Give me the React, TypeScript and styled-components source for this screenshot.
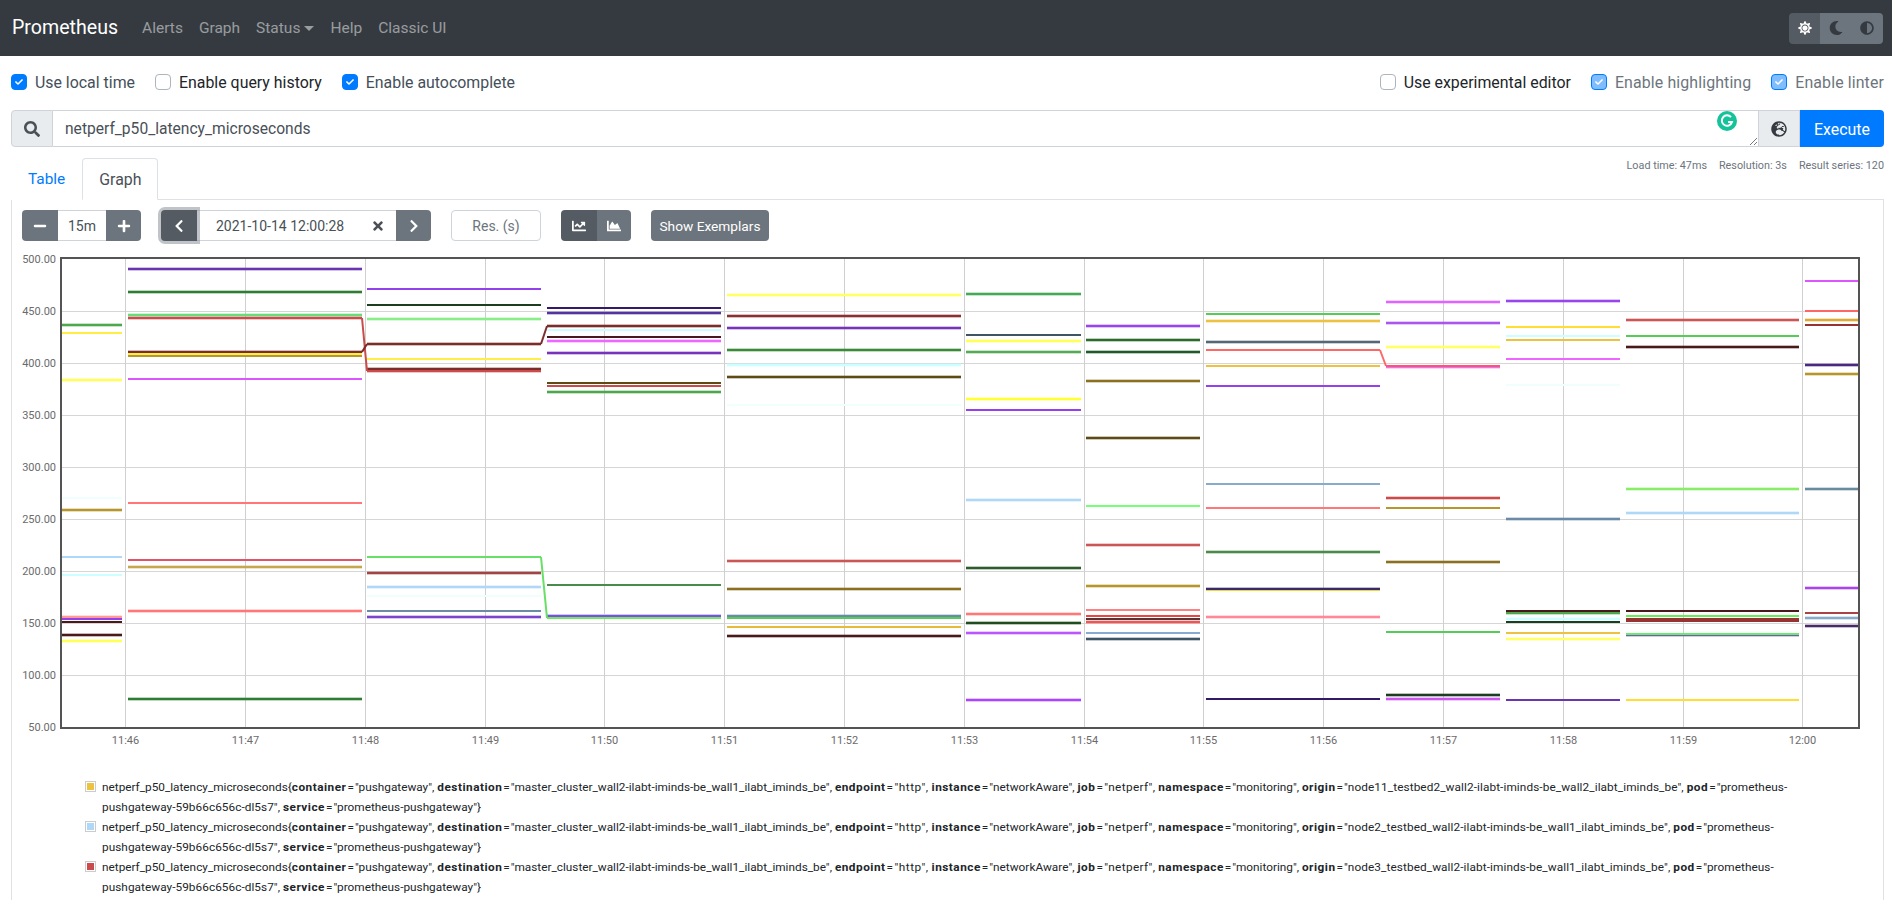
import React from "react";
import styled, { createGlobalStyle } from "styled-components";
import { FaSearch, FaGlobeEurope, FaSun, FaMoon, FaAdjust, FaMinus, FaPlus, FaChevronLeft, FaChevronRight, FaTimes, FaChartLine, FaChartArea, FaCheck } from "react-icons/fa";

const FONT = `Roboto, "Liberation Sans", sans-serif`;

const Global = createGlobalStyle`
  html, body { margin: 0; padding: 0; height: 100%; overflow: hidden; background: #fff; }
  body { font-family: ${FONT}; font-size: 15.9px; color: #212529; }
  * { box-sizing: border-box; }
`;

const Page = styled.div`display: flex; flex-direction: column; height: 100vh;`;
const Navbar = styled.nav`display: flex; align-items: center; height: 56px; padding: 0 9px 0 12px; background: #343a40; flex: none;`;
const Brand = styled.span`font-size: 19.6px; color: #fff; margin-right: 16px; margin-top: -2px;`;
const NavLink = styled.span`color: rgba(255,255,255,.5); font-size: 15.5px; padding: 0 8px; display: inline-flex; align-items: center;`;
const Caret = styled.i`margin-left: 4px; border-top: 5px solid; border-left: 5px solid transparent; border-right: 5px solid transparent;`;
const ThemeGroup = styled.div`margin-left: auto; display: flex; border-radius: 4px; overflow: hidden; height: 31px;`;
const ThemeBtn = styled.span<{ $on?: boolean }>`width: 31.3px; display: flex; align-items: center; justify-content: center; font-size: 14px; background: ${p => p.$on ? "#545b62" : "#6c757d"}; color: ${p => p.$on ? "#fff" : "#343a40"};`;

const Main = styled.main`flex: 1; display: flex; flex-direction: column; padding: 0 8px 0 11px; min-height: 0;`;
const OptionsRow = styled.div`display: flex; justify-content: space-between; margin-top: 14px; height: 24px;`;
const OptionGroup = styled.div`display: flex;`;
const Option = styled.label<{ $disabled?: boolean; $checked?: boolean }>`display: flex; align-items: center; gap: 8px; margin-right: 20px; letter-spacing: ${p => p.$disabled ? ".12px" : "0"}; color: ${p => p.$disabled ? "#6c757d" : p.$checked ? "#444f5a" : "#212529"}; &:last-child { margin-right: 0; }`;
const Box = styled.span<{ $checked?: boolean; $disabled?: boolean }>`
  width: 16px; height: 16px; border-radius: 4px; display: flex; align-items: center; justify-content: center; color: #fff; font-size: 8px;
  background: ${p => !p.$checked ? "#fff" : p.$disabled ? "#80bdff" : "#007bff"};
  border: 1px solid ${p => p.$checked ? "#007bff" : "#adb5bd"};
`;

const QueryRow = styled.div`display: flex; height: 37px; margin-top: 16px; position: relative;`;
const Prepend = styled.div`width: 42px; display: flex; align-items: center; justify-content: center; background: #e9ecef; border: 1px solid #ced4da; border-radius: 4px 0 0 4px; color: #495057; font-size: 16px;`;
const QueryInput = styled.div`flex: 1; display: flex; align-items: center; padding: 1px 0 0 12px; border: 1px solid #ced4da; border-left: none; color: #495057; font-size: 15.6px; position: relative;`;
const Resize = styled.svg`position: absolute; right: 0; bottom: 0;`;
const Grammarly = styled.svg`position: absolute; right: 21px; top: 0;`;
const GlobeBtn = styled.div`width: 41px; display: flex; align-items: center; justify-content: center; background: #e9ecef; border: 1px solid #ced4da; border-left: none; color: #343a40; font-size: 16px;`;
const Execute = styled.div`width: 84px; padding-top: 1px; display: flex; align-items: center; justify-content: center; background: #007bff; color: #fff; border-radius: 0 4px 4px 0;`;

const TabsRow = styled.div`display: flex; justify-content: space-between; align-items: flex-start; margin-top: 9px; flex: none;`;
const Tabs = styled.div`display: flex; margin-top: 2px;`;
const Tab = styled.div<{ $active?: boolean }>`height: 42px; padding: 0 16px; font-size: ${p => p.$active ? 15.9 : 15.4}px; display: flex; align-items: center; border: 1px solid ${p => p.$active ? "#dee2e6" : "transparent"}; border-bottom-color: ${p => p.$active ? "#fff" : "transparent"}; border-radius: 4px 4px 0 0; background: #fff; color: ${p => p.$active ? "#495057" : "#007bff"}; position: relative; z-index: 1;`;
const Stats = styled.div`display: flex; gap: 12px; font-size: 10.8px; line-height: 20px; color: #6c757d;`;
const Pane = styled.section`flex: 1; margin-top: -1px; border: 1px solid #dee2e6; border-bottom: none; padding: 10px 0 0 10px; min-height: 0;`;

const Controls = styled.div`display: flex; height: 31px; font-size: 14px;`;
const Group = styled.div`display: flex; margin-right: 20px;`;
const Btn = styled.span<{ $w: number; $dark?: boolean; $l?: boolean; $r?: boolean; $focus?: boolean }>`
  width: ${p => p.$w}px; display: flex; align-items: center; justify-content: center; color: #fff;
  background: ${p => p.$dark ? "#545b62" : "#6c757d"};
  border-radius: ${p => p.$l ? 4 : 0}px ${p => p.$r ? 4 : 0}px ${p => p.$r ? 4 : 0}px ${p => p.$l ? 4 : 0}px;
  ${p => p.$focus ? "box-shadow: 0 0 0 3px rgba(130,138,145,.5); position: relative; z-index: 1;" : ""}
`;
const Field = styled.span<{ $w: number; $muted?: boolean; $round?: boolean }>`
  width: ${p => p.$w}px; display: flex; align-items: center; justify-content: center; position: relative;
  border: 1px solid #ced4da; ${p => p.$round ? "border-radius: 4px;" : "border-left: none; border-right: none;"}
  color: ${p => p.$muted ? "#6c757d" : "#495057"}; background: #fff;
`;
const DateField = styled(Field)`justify-content: flex-start; padding-left: 19px;`;
const Clear = styled.span`position: absolute; right: 11px; top: 8px; color: #495057; font-size: 14px; display: flex;`;
const TextBtn = styled.span`width: 118px; border-radius: 4px; background: #6c757d; color: #fff; font-size: 13.7px; display: flex; align-items: center; justify-content: center;`;

const ChartSvg = styled.svg`display: block; margin-top: 9px; flex: none;`;
const AxisText = styled.text`font-family: ${FONT}; font-size: 11px; fill: #6b6b6b;`;

const Legend = styled.div`margin: 22px 0 0 63px; width: 1716px; font-size: 11.8px; line-height: 20px;`;
const LegendRow = styled.div`display: flex;`;
const Swatch = styled.span<{ $c: string }>`flex: none; width: 11px; height: 11px; margin: 4px 6px 0 0; border: 1px solid #ccc; padding: 1px; &::before { content: ""; display: block; width: 100%; height: 100%; background: ${p => p.$c}; }`;
const Key = styled.b`letter-spacing: .5px;`;
const Eq = styled.span`margin: 0 1px;`;
const PairWrap = styled.span<{ $ls: number }>`letter-spacing: ${p => p.$ls}px;`;

const C = {
  gold: "#edc240", blue: "#afd8f8", red: "#cb4b4b", green: "#4da74d", purple: "#9440ed",
  yellow: "#ffee44", lemon: "#ffff55", cyan: "#ccffff", pale: "#f0fffd", dgreen: "#2e7d32", dkgreen: "#1c3d20",
  lgreen: "#77ee77", mgreen: "#55cc55", pink: "#ff7777", magenta: "#e866ff", maroon: "#7d2c2c", dark: "#4a1a1a",
  vio: "#6a35b0", ind: "#331a66", olive: "#b8962e", brown: "#5e4a14", khaki: "#8c7022", steel: "#6a8aa8",
  slate: "#3f5566", sky: "#88aacc", orchid: "#bb55ff",
};

type L = [number, string, 1?];
type Seg = { x: [number, number]; lines: L[] };
const segs: Seg[] = [
  { x: [62, 122], lines: [[325, C.green, 1], [333, C.yellow], [380, C.lemon, 1], [498, C.pale], [510, C.olive, 1], [557, C.blue], [575, C.cyan], [617, "#ff9999", 1], [619, C.purple], [622, C.dark], [635, C.dark, 1], [641, C.lemon, 1]] },
  { x: [128, 362], lines: [[269, C.vio, 1], [292, C.dgreen, 1], [315, "#66dd77", 1], [318, C.red, 1], [352, C.maroon, 1], [354, C.yellow], [356, C.olive], [379, "#dd55ff"], [503, C.pink], [560, "#dd5566"], [567, "#c4a850", 1], [611, C.pink, 1], [699, C.dgreen, 1]] },
  { x: [367, 541], lines: [[289, C.purple], [305, C.dkgreen], [319, "#88ee88", 1], [344, C.maroon, 1], [359, C.yellow], [369, C.maroon, 1], [371, C.red, 1], [557, "#66e066"], [573, "#a04444", 1], [587, C.blue, 1], [596, C.pale], [611, C.steel], [617, "#7a44cc", 1]] },
  { x: [547, 721], lines: [[308, C.ind], [313, "#5533a0", 1], [326, C.maroon, 1], [330, C.cyan], [337, C.dark], [341, "#ee66ff", 1], [353, "#7733bb", 1], [383, C.brown], [386, C.red], [392, C.green, 1], [585, "#4a8a4a"], [615, C.blue], [616, C.purple], [618, "#66ee55"]] },
  { x: [727, 961], lines: [[295, "#ffff66", 1], [316, "#8a3030", 1], [328, "#7733bb", 1], [350, "#3a8a3a", 1], [365, C.cyan, 1], [377, C.brown, 1], [405, C.pale], [561, "#cc5555", 1], [589, C.khaki, 1], [616, C.steel, 1], [618, C.mgreen], [627, "#e8b93a"], [636, C.dark, 1]] },
  { x: [966, 1081], lines: [[294, "#44aa55", 1], [335, C.slate], [341, "#ffff55", 1], [352, "#55aa55", 1], [399, "#ffff33", 1], [410, C.purple], [500, C.blue, 1], [568, "#2d5d2d", 1], [614, C.pink, 1], [623, "#1f4d1f", 1], [633, C.orchid, 1], [700, "#aa44ff", 1]] },
  { x: [1086, 1200], lines: [[326, "#9944ee", 1], [340, "#2d6b2d", 1], [352, "#1f5a2a", 1], [381, C.khaki, 1], [438, C.brown, 1], [506, "#77ff77"], [545, "#cc5555", 1], [586, C.olive, 1], [610, "#ff8080"], [616, "#ee4444"], [622, "#ee5555", 1], [619, "#553333"], [633, C.sky], [639, C.slate, 1]] },
  { x: [1206, 1380], lines: [[314, C.mgreen], [321, C.gold, 1], [342, "#556677", 1], [350, "#ff6666"], [366, C.gold], [386, C.purple], [484, C.sky], [508, C.pink], [552, "#4a8a4a", 1], [590, "#e8d840"], [589, "#3a2a66", 1], [617, "#ff8899", 1], [699, C.ind]] },
  { x: [1386, 1500], lines: [[302, "#dd66ff", 1], [323, "#aa55ee", 1], [347, "#ffff66", 1], [367, "#dd77ff", 1], [366, "#ff5566"], [498, C.red, 1], [508, C.olive], [562, C.khaki, 1], [632, C.mgreen], [695, C.dkgreen, 1], [699, "#cc55ee", 1]] },
  { x: [1506, 1620], lines: [[301, "#9944ee", 1], [327, "#ffdd33"], [336, C.cyan], [340, C.gold], [359, "#ee66ff"], [385, C.pale], [519, C.steel, 1], [611, C.dark], [613, C.green, 1], [619, C.cyan, 1], [622, C.dkgreen], [633, C.gold], [639, "#ffff66", 1], [700, C.vio]] },
  { x: [1626, 1799], lines: [[320, "#cc5555", 1], [336, C.mgreen], [347, C.dark, 1], [489, "#88ee66", 1], [513, C.blue, 1], [611, C.dark], [619, "#993333"], [621, "#993333"], [616, "#66ee55"], [635, "#7a55bb", 1], [634, "#66ee66"], [700, "#ffdd33"]] },
  { x: [1805, 1859], lines: [[281, "#dd55ff"], [311, "#ff6666"], [320, "#ddaa33", 1], [325, "#993333"], [365, "#4a2a80", 1], [374, C.olive, 1], [489, "#6a8aa0", 1], [588, "#aa44ee", 1], [613, "#aa4444"], [618, C.sky, 1], [626, "#4a2a66", 1]] },
];
const connectors: { pts: string; c: string }[] = [
  { pts: "362,318 367,371", c: C.red },
  { pts: "362,352 367,344", c: C.maroon },
  { pts: "541,344 547,326", c: C.maroon },
  { pts: "541,557 547,618", c: "#66e066" },
  { pts: "1380,350 1386,366", c: "#ff6666" },
];

const yTicks = [500, 450, 400, 350, 300, 250, 200, 150, 100, 50];
const xTicks = ["11:46", "11:47", "11:48", "11:49", "11:50", "11:51", "11:52", "11:53", "11:54", "11:55", "11:56", "11:57", "11:58", "11:59", "12:00"];
const xPos = [125.5, 245.5, 365.5, 485.5, 604.5, 724.5, 844.5, 964.5, 1084.5, 1203.5, 1323.5, 1443.5, 1563.5, 1683.5, 1802.5];
const yPos = (v: number) => (v === 50 ? 727.5 : 363.5 + (400 - v) * 1.04);

function Chart() {
  return (
    <ChartSvg width={1841} height={505} viewBox="22 250 1841 505">
      {yTicks.slice(1, -1).map(v => <line key={v} x1={61} x2={1860} y1={yPos(v)} y2={yPos(v)} stroke="#d6d6d6" />)}
      {xPos.map(x => <line key={x} x1={x} x2={x} y1={259} y2={728} stroke="#cfcfcf" />)}
      {segs.map((s, i) => (
        <g key={i}>
          {s.lines.filter(l => l[2]).map((l, j) => <line key={j} x1={s.x[0]} x2={s.x[1]} y1={l[0]} y2={l[0]} stroke={l[1]} strokeWidth={4} opacity={0.3} />)}
          {s.lines.map((l, j) => <line key={j} x1={s.x[0]} x2={s.x[1]} y1={l[0]} y2={l[0]} stroke={l[1]} strokeWidth={2} />)}
        </g>
      ))}
      {connectors.map((c, i) => <polyline key={i} points={c.pts} fill="none" stroke={c.c} strokeWidth={2} />)}
      <rect x={61} y={258} width={1798} height={470} fill="none" stroke="#545454" strokeWidth={2} />
      {yTicks.map(v => <AxisText key={v} x={56} y={(v === 50 ? 728 : yPos(v)) + 3} textAnchor="end">{v.toFixed(2)}</AxisText>)}
      {xTicks.map((t, i) => <AxisText key={t} x={xPos[i]} y={744} textAnchor="middle">{t}</AxisText>)}
    </ChartSvg>
  );
}

const series = [
  { c: "#edc240", o: "node11_testbed2_wall2-ilabt-iminds-be_wall2_ilabt_iminds_be" },
  { c: "#afd8f8", o: "node2_testbed_wall2-ilabt-iminds-be_wall1_ilabt_iminds_be" },
  { c: "#cb4b4b", o: "node3_testbed_wall2-ilabt-iminds-be_wall1_ilabt_iminds_be" },
];

const Opt = ({ label, checked, disabled }: { label: string; checked?: boolean; disabled?: boolean }) => (
  <Option $checked={checked} $disabled={disabled}>
    <Box $checked={checked} $disabled={disabled}>{checked && <FaCheck />}</Box>
    {label}
  </Option>
);

const Pair = ({ k, v, last, ls = 0 }: { k: string; v: string; last?: boolean; ls?: number }) => (
  <>
    <PairWrap $ls={ls}><Key>{k}</Key><Eq>=</Eq>"{v}"{last ? "" : ","}</PairWrap>{last ? "" : " "}
  </>
);

export default function App() {
  return (
    <Page>
      <Global />
      <Navbar>
        <Brand>Prometheus</Brand>
        <NavLink>Alerts</NavLink>
        <NavLink>Graph</NavLink>
        <NavLink>Status<Caret /></NavLink>
        <NavLink>Help</NavLink>
        <NavLink>Classic UI</NavLink>
        <ThemeGroup>
          <ThemeBtn $on><FaSun /></ThemeBtn>
          <ThemeBtn><FaMoon /></ThemeBtn>
          <ThemeBtn><FaAdjust /></ThemeBtn>
        </ThemeGroup>
      </Navbar>
      <Main>
        <OptionsRow>
          <OptionGroup>
            <Opt label="Use local time" checked />
            <Opt label="Enable query history" />
            <Opt label="Enable autocomplete" checked />
          </OptionGroup>
          <OptionGroup>
            <Opt label="Use experimental editor" />
            <Opt label="Enable highlighting" checked disabled />
            <Opt label="Enable linter" checked disabled />
          </OptionGroup>
        </OptionsRow>
        <QueryRow>
          <Prepend><FaSearch /></Prepend>
          <QueryInput>
            netperf_p50_latency_microseconds
            <Grammarly width={20} height={20} viewBox="0 0 20 20">
              <circle cx={10} cy={10} r={10} fill="#15c39a" />
              <path d="M14 6.2A5.2 5.2 0 1 0 15 11h-4" fill="none" stroke="#fff" strokeWidth={2} />
            </Grammarly>
            <Resize width={9} height={9} viewBox="0 0 9 9">
              <path d="M1 8L8 1M5 8L8 5" stroke="#555" strokeWidth={0.8} />
            </Resize>
          </QueryInput>
          <GlobeBtn><FaGlobeEurope /></GlobeBtn>
          <Execute>Execute</Execute>
        </QueryRow>
        <TabsRow>
          <Tabs>
            <Tab>Table</Tab>
            <Tab $active>Graph</Tab>
          </Tabs>
          <Stats>
            <span>Load time: 47ms</span>
            <span>Resolution: 3s</span>
            <span>Result series: 120</span>
          </Stats>
        </TabsRow>
        <Pane>
          <Controls>
            <Group>
              <Btn $w={36} $l><FaMinus /></Btn>
              <Field $w={48}>15m</Field>
              <Btn $w={35} $r><FaPlus /></Btn>
            </Group>
            <Group>
              <Btn $w={36} $l $dark $focus><FaChevronLeft /></Btn>
              <DateField $w={199}>2021-10-14 12:00:28<Clear><FaTimes /></Clear></DateField>
              <Btn $w={35} $r><FaChevronRight /></Btn>
            </Group>
            <Group>
              <Field $w={90} $muted $round>Res. (s)</Field>
            </Group>
            <Group>
              <Btn $w={36} $l $dark><FaChartLine /></Btn>
              <Btn $w={34} $r><FaChartArea /></Btn>
            </Group>
            <TextBtn>Show Exemplars</TextBtn>
          </Controls>
          <Chart />
          <Legend>
            {series.map(s => (
              <LegendRow key={s.o}>
                <Swatch $c={s.c} />
                <span>
                  netperf_p50_latency_microseconds{"{"}
                  <Pair k="container" v="pushgateway" />
                  <Pair k="destination" v="master_cluster_wall2-ilabt-iminds-be_wall1_ilabt_iminds_be" />
                  <Pair k="endpoint" v="http" ls={0.5} />
                  <Pair k="instance" v="networkAware" ls={0.03} />
                  <Pair k="job" v="netperf" ls={0.35} />
                  <Pair k="namespace" v="monitoring" />
                  <Pair k="origin" v={s.o} ls={0.09} />
                  <Pair k="pod" v="prometheus-pushgateway-59b66c656c-dl5s7" ls={0.05} />
                  <Pair k="service" v="prometheus-pushgateway" last />{"}"}
                </span>
              </LegendRow>
            ))}
          </Legend>
        </Pane>
      </Main>
    </Page>
  );
}
